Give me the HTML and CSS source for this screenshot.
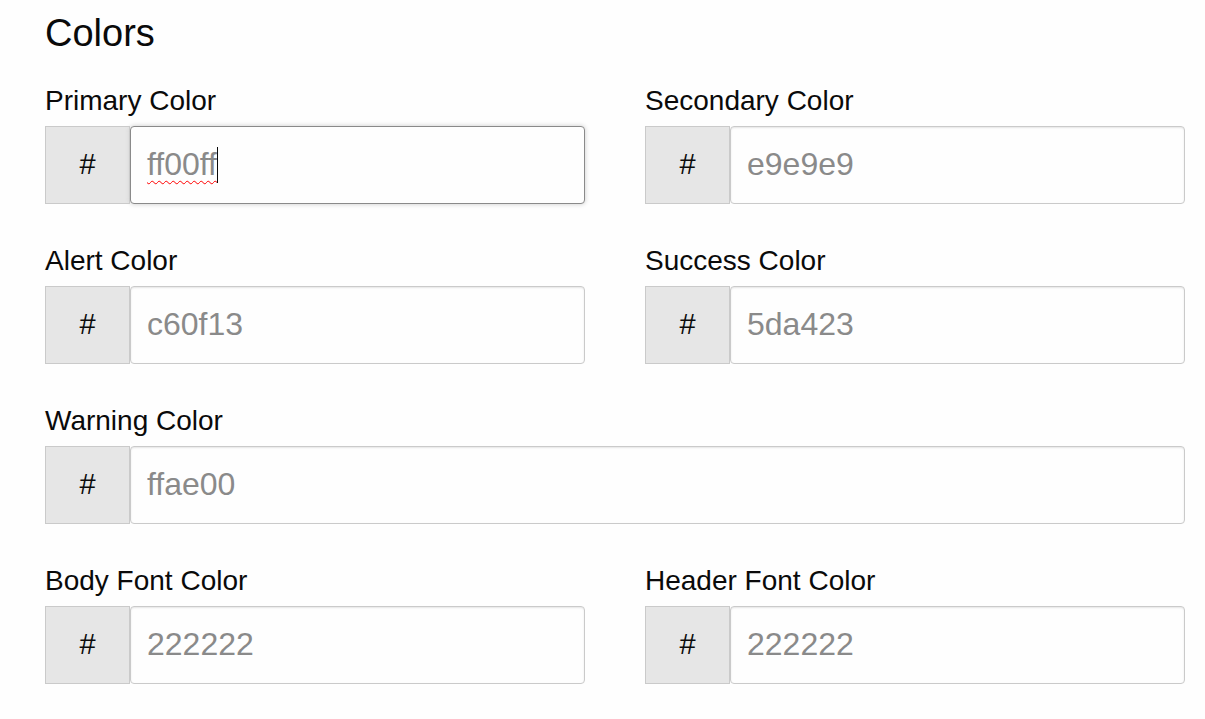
FILE: index.html
```html
<!DOCTYPE html>
<html lang="en">
<head>
<meta charset="utf-8">
<title>Colors</title>
<link rel="stylesheet" href="styles.css">
</head>
<body>
<main class="page">
  <h1 class="title">Colors</h1>
  <div class="fields">
    <div class="field">
      <label class="label">Primary Color</label>
      <div class="input-group">
        <span class="prefix">#</span>
        <div class="input is-focused"><span class="typed">ff00ff</span><span class="caret"></span></div>
      </div>
    </div>
    <div class="field">
      <label class="label">Secondary Color</label>
      <div class="input-group">
        <span class="prefix">#</span>
        <input class="input" type="text" placeholder="e9e9e9">
      </div>
    </div>
    <div class="field">
      <label class="label">Alert Color</label>
      <div class="input-group">
        <span class="prefix">#</span>
        <input class="input" type="text" placeholder="c60f13">
      </div>
    </div>
    <div class="field">
      <label class="label">Success Color</label>
      <div class="input-group">
        <span class="prefix">#</span>
        <input class="input" type="text" placeholder="5da423">
      </div>
    </div>
    <div class="field field-wide">
      <label class="label">Warning Color</label>
      <div class="input-group">
        <span class="prefix">#</span>
        <input class="input" type="text" placeholder="ffae00">
      </div>
    </div>
    <div class="field">
      <label class="label">Body Font Color</label>
      <div class="input-group">
        <span class="prefix">#</span>
        <input class="input" type="text" placeholder="222222">
      </div>
    </div>
    <div class="field">
      <label class="label">Header Font Color</label>
      <div class="input-group">
        <span class="prefix">#</span>
        <input class="input" type="text" placeholder="222222">
      </div>
    </div>
  </div>
</main>
</body>
</html>
```

FILE: styles.css
```css
html, body {
  margin: 0;
  padding: 0;
  background: #fefefe;
}

body {
  font-family: "Liberation Sans", Arial, sans-serif;
  color: #0a0a0a;
}

.page {
  padding: 11px 20px 0 45px;
}

.title {
  margin: 0;
  font-size: 38px;
  font-weight: 400;
  line-height: 1.2;
  color: #0a0a0a;
}

.fields {
  margin-top: 27px;
  display: grid;
  grid-template-columns: 1fr 1fr;
  column-gap: 60px;
  row-gap: 40px;
}

.field-wide {
  grid-column: 1 / -1;
}

.label {
  display: block;
  font-size: 28px;
  line-height: 34px;
  color: #0a0a0a;
  margin-bottom: 8px;
}

.input-group {
  display: flex;
  height: 78px;
}

.prefix {
  flex: 0 0 auto;
  width: 83px;
  display: flex;
  align-items: center;
  justify-content: center;
  background: #e6e6e6;
  border: 1px solid #cacaca;
  font-size: 29px;
  color: #0a0a0a;
}

.input {
  flex: 1 1 auto;
  min-width: 0;
  box-sizing: border-box;
  height: 78px;
  margin: 0;
  padding: 0 16px;
  border: 1px solid #cacaca;
  border-radius: 4px;
  background: #fefefe;
  box-shadow: inset 0 1px 2px rgba(10, 10, 10, 0.1);
  font-family: "Liberation Sans", Arial, sans-serif;
  font-size: 32px;
  color: #8a8a8a;
  outline: none;
}

.input::placeholder {
  color: #8a8a8a;
  opacity: 1;
}

.input.is-focused {
  display: flex;
  align-items: center;
  border-color: #8a8a8a;
  box-shadow: 0 0 5px #cacaca;
  padding-left: 16px;
}

.typed {
  color: #8a8a8a;
  text-decoration: underline wavy #ff0000;
  text-decoration-thickness: 1px;
  text-underline-offset: 5px;
  text-decoration-skip-ink: none;
}

.caret {
  display: inline-block;
  width: 1px;
  height: 36px;
  background: #0a0a0a;
  margin-left: 0;
}
```
